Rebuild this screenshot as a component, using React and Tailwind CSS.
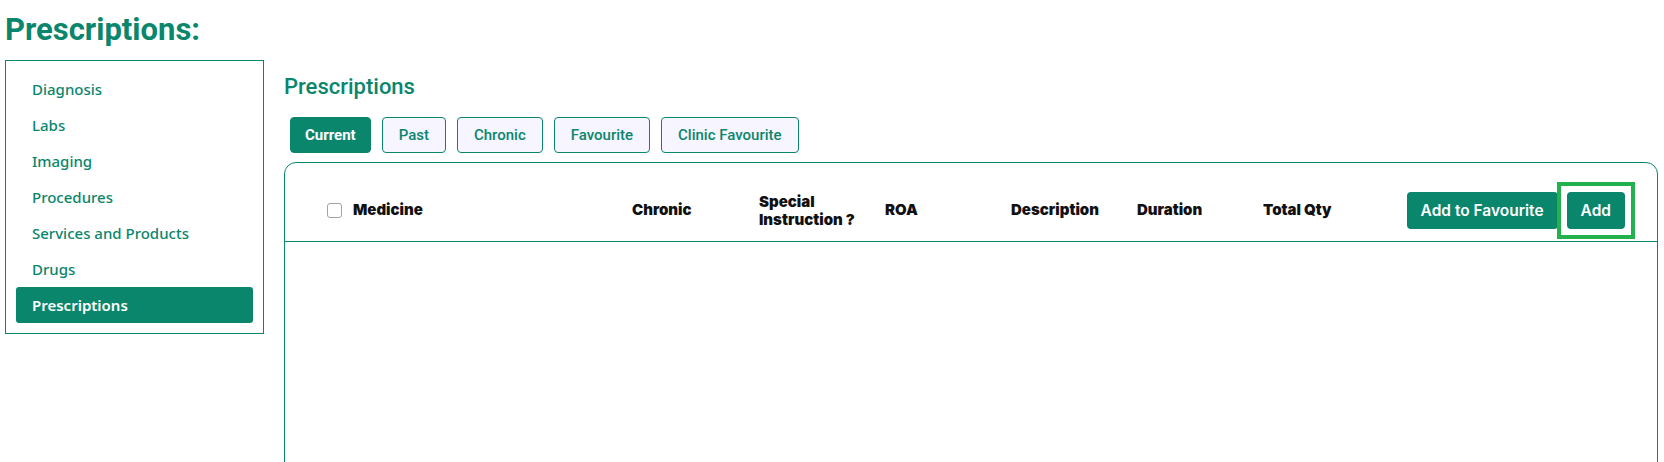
export default function App() {
  const items = ["Diagnosis", "Labs", "Imaging", "Procedures", "Services and Products", "Drugs", "Prescriptions"];
  const tabs = ["Current", "Past", "Chronic", "Favourite", "Clinic Favourite"];
  return (
    <div className="w-[1664px] h-[462px] overflow-hidden bg-white font-['Roboto',sans-serif]">
      <div className="pl-[5px] pt-3">
        <h1 className="text-[31px] leading-[36px] font-bold text-[#0a866c]">Prescriptions:</h1>
      </div>
      <div className="flex mt-3 pl-[5px] pr-[6px] gap-[20px]">
        <aside className="w-[259px] shrink-0 self-start border border-[#0a866c] p-[10px] flex flex-col font-['Noto_Sans',sans-serif]">
          {items.map((it) => {
            const active = it === "Prescriptions";
            return (
              <div
                key={it}
                className={
                  active
                    ? "h-9 flex items-center pl-4 rounded-[3px] bg-[#0a866c] text-white text-[15px] font-semibold"
                    : "h-9 flex items-center pl-4 text-[#0a866c] text-[15px] font-medium"
                }
              >
                {it}
              </div>
            );
          })}
        </aside>
        <main className="flex-1 min-w-0">
          <h2 className="mt-[14px] text-[22px] leading-[26px] font-medium text-[#0a866c]">Prescriptions</h2>
          <div className="mt-[17px] ml-[6px] flex gap-[11px]">
            {tabs.map((t) => (
              <button
                key={t}
                className={
                  t === "Current"
                    ? "h-9 px-3.5 rounded-[4px] border border-[#0a866c] bg-[#0a866c] text-white text-[15px] font-bold"
                    : "h-9 px-4 rounded-[4px] border border-[#0a866c] bg-[#f7f5ff] text-[#0a866c] text-[15px] font-medium"
                }
              >
                {t}
              </button>
            ))}
          </div>
          <div className="mt-[9px] h-[340px] rounded-xl border border-[#0a866c]">
            <div className="flex items-center pl-[42px] pr-8 pt-[29px] pb-[12px] border-b border-[#0a866c] font-['Inter',sans-serif] text-[15px] font-black text-[#111]">
              <div className="w-[15px] h-[15px] rounded-[3px] border border-[#a3a3a3] bg-white shrink-0" />
              <div className="ml-[11px] w-[279px] shrink-0">Medicine</div>
              <div className="w-[127px] shrink-0">Chronic</div>
              <div className="w-[126px] shrink-0 leading-[18px]">
                <div className="w-[112px]">Special Instruction ?</div>
              </div>
              <div className="w-[126px] shrink-0">ROA</div>
              <div className="w-[126px] shrink-0">Description</div>
              <div className="w-[126px] shrink-0">Duration</div>
              <div className="shrink-0">Total Qty</div>
              <div className="ml-auto flex gap-[9px] font-['Inter',sans-serif] font-semibold text-[15.5px]">
                <button className="h-[37px] px-3.5 rounded-[4px] bg-[#0a866c] text-white">Add to Favourite</button>
                <div className="outline-[4px] outline-solid outline-[#22b14c] outline-offset-[6px]">
                  <button className="h-[37px] px-3.5 rounded-[4px] bg-[#0a866c] text-white block">Add</button>
                </div>
              </div>
            </div>
          </div>
        </main>
      </div>
    </div>
  );
}
